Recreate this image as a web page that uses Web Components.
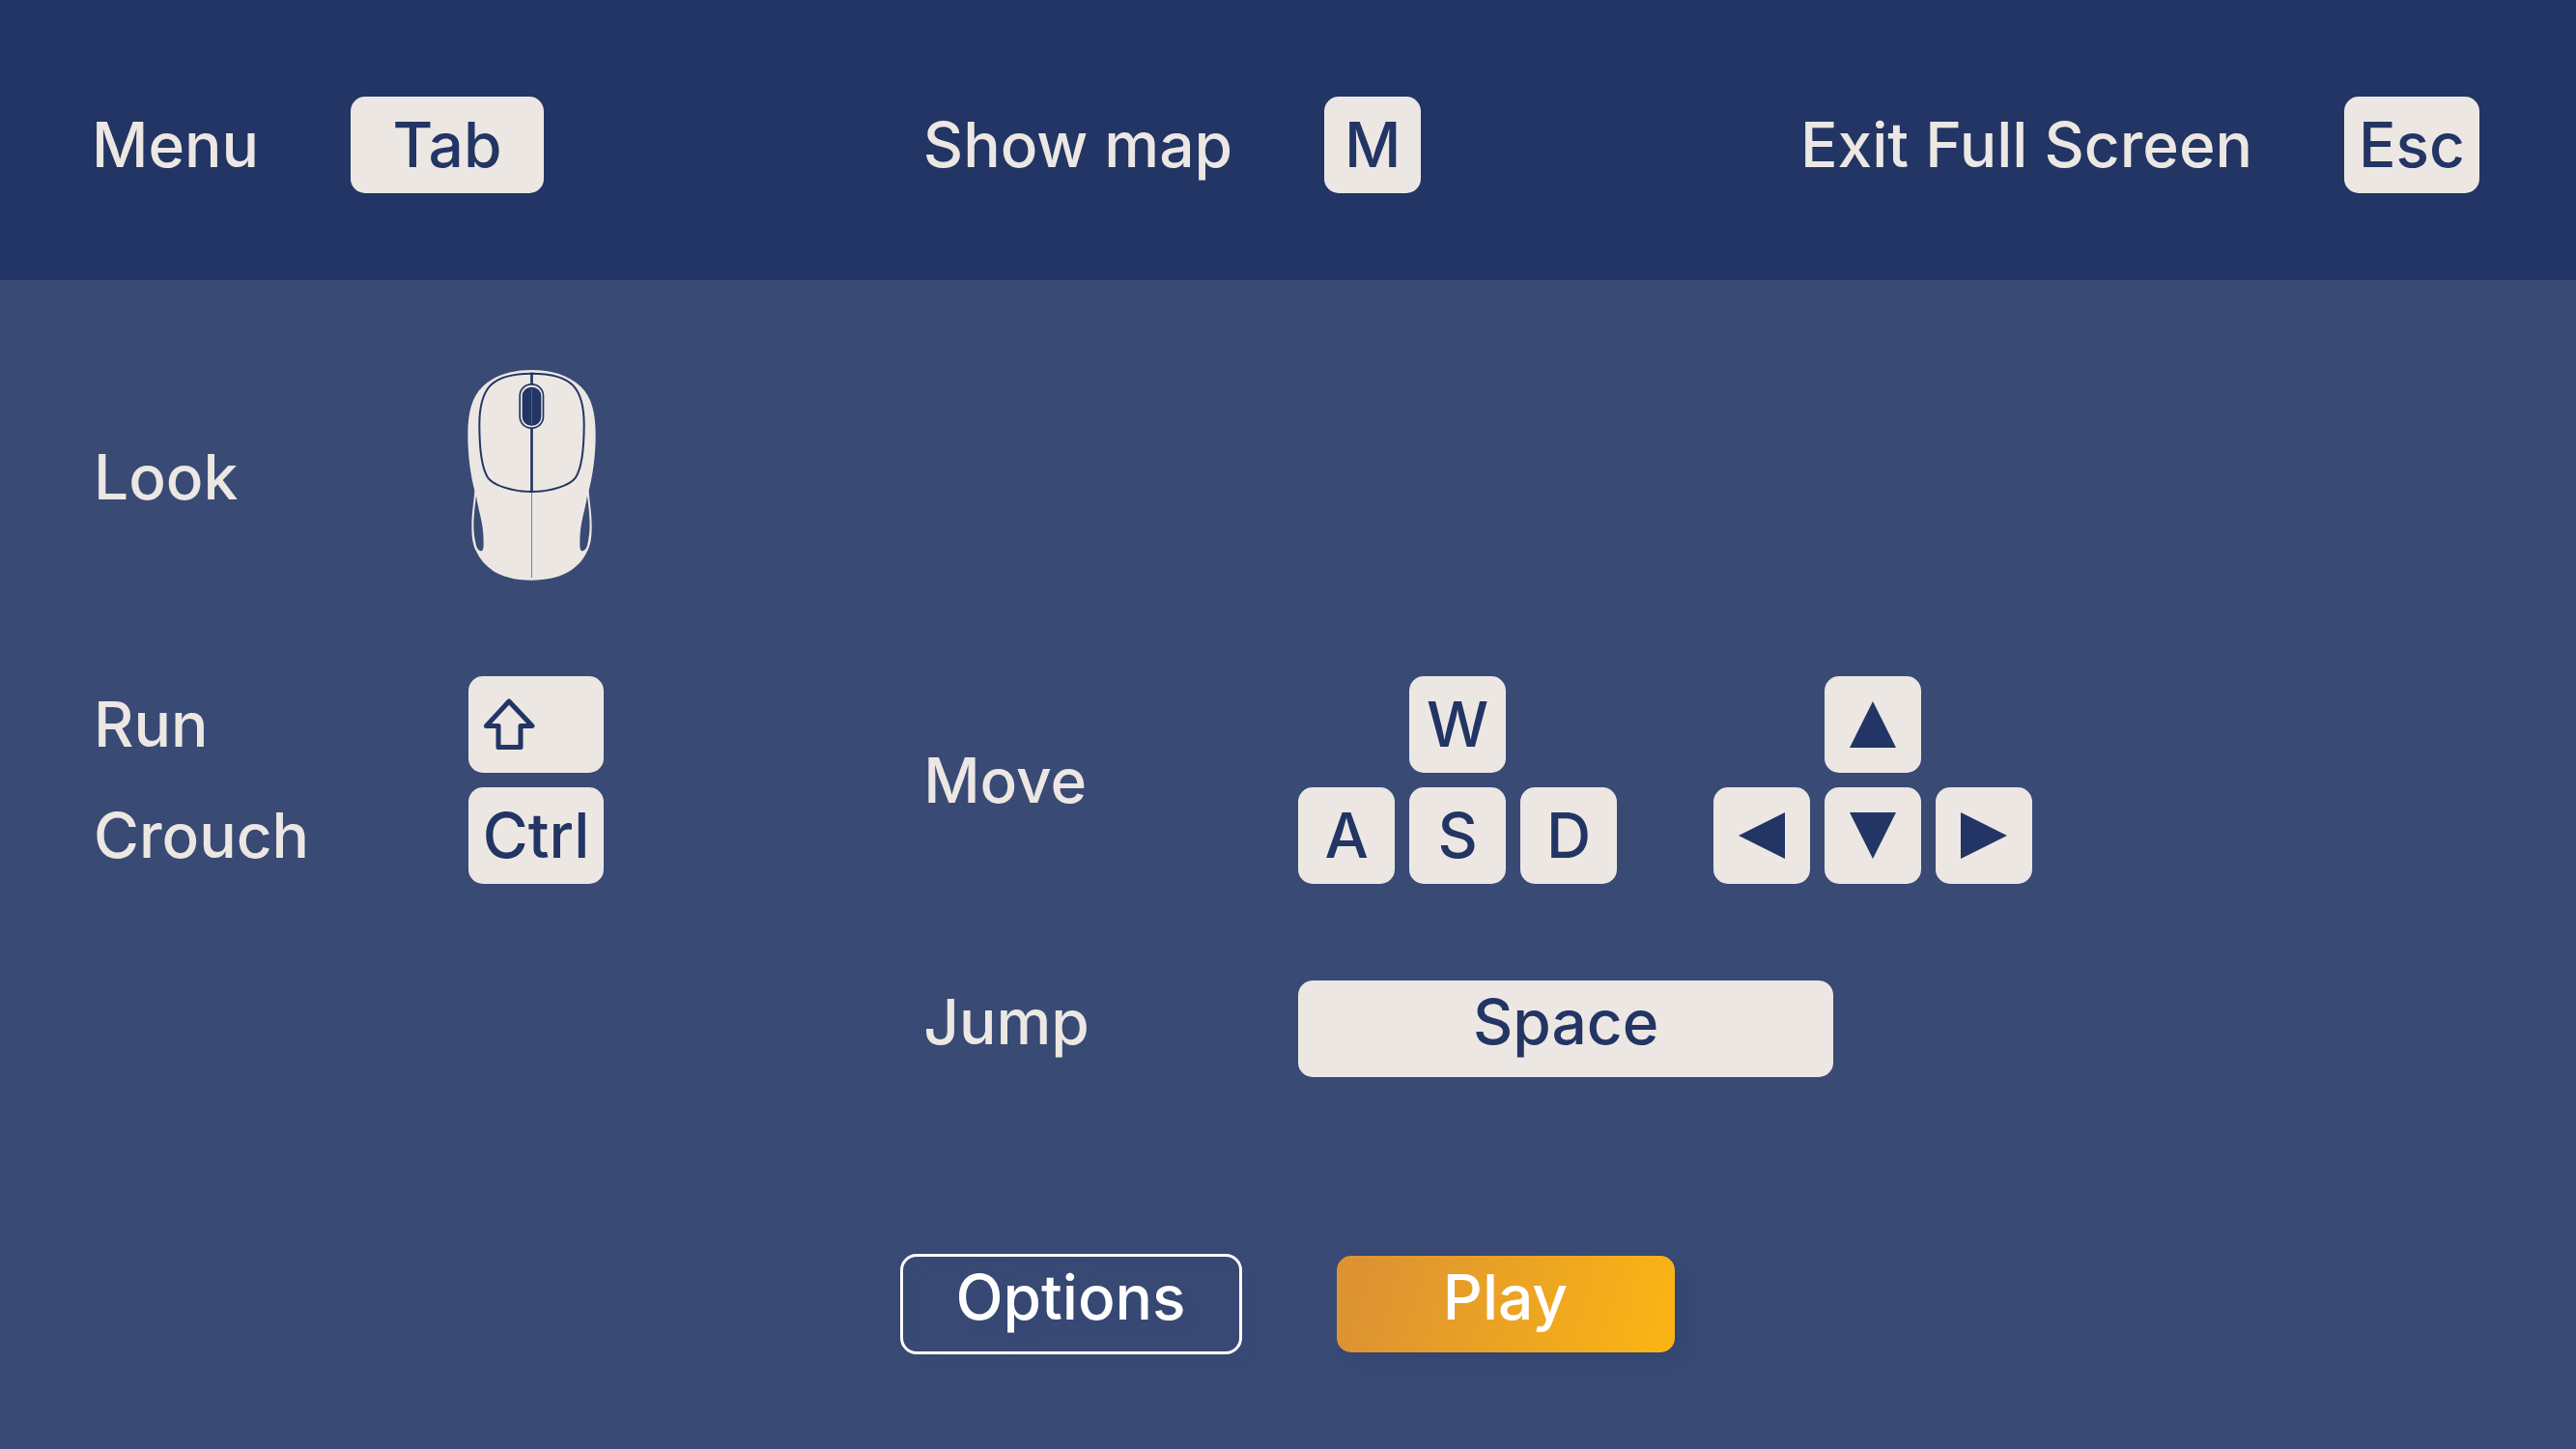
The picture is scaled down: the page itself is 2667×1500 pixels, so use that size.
<!DOCTYPE html>
<html lang="en">
<head>
<meta charset="utf-8">
<meta name="viewport" content="width=device-width, initial-scale=1">
<title>Controls</title>
<style>
  html { height: 100%; }
  body {
    --ink: #223564;
    --paper: #ece7e3;
    --bg: #394a75;
    --key: 100px;
    --gap: 15px;
    --label: 388px;
    margin: 0;
    min-height: 100%;
    background: var(--bg);
    color: var(--paper);
    font: 500 64px/78px Inter, "Liberation Sans", sans-serif;
  }
</style>
</head>
<body>
<controls-screen></controls-screen>

<template id="t-key">
  <style>
    :host { display: block; }
    kbd {
      box-sizing: border-box;
      display: flex; align-items: center; justify-content: center;
      min-width: var(--key); height: var(--key);
      border-radius: 15px;
      background: var(--paper); color: var(--ink);
      font: inherit;
    }
    :host([size="medium"]) kbd { width: 140px; }
    :host([size="wide"]) kbd { width: 200px; }
    :host([size="space"]) kbd { width: 554px; padding-bottom: 14px; }
    :host([align="start"]) kbd { justify-content: flex-start; padding-left: 15px; }
  </style>
  <kbd><slot></slot></kbd>
</template>

<template id="t-hint">
  <style>
    :host { display: flex; align-items: center; gap: 95px; }
    :host([column]) { gap: 0; }
    :host([column]) .label { width: var(--label); }
    :host([raised]) .label { padding-bottom: 14px; }
    .label { white-space: nowrap; }
  </style>
  <span class="label"><slot name="label"></slot></span>
  <slot></slot>
</template>

<template id="t-cluster">
  <style>
    :host {
      display: grid;
      grid-template-columns: repeat(3, var(--key));
      gap: var(--gap);
    }
    ::slotted(:first-child) { grid-column: 2; }
    ::slotted(:nth-child(2)) { grid-column: 1; }
  </style>
  <slot></slot>
</template>

<template id="t-arrow">
  <style>
    :host { display: block; width: 48px; height: 48px; }
    svg { display: block; width: 100%; height: 100%; fill: var(--ink); }
    :host([dir="right"]) svg { transform: rotate(90deg); }
    :host([dir="down"]) svg { transform: rotate(180deg); }
    :host([dir="left"]) svg { transform: rotate(270deg); }
  </style>
  <svg viewBox="0 0 48 48" aria-hidden="true"><path d="M24 0 48 48H0Z"/></svg>
</template>

<template id="t-shift">
  <style>
    :host { display: block; width: 54px; height: 54px; }
    svg { display: block; fill: none; stroke: var(--ink); stroke-width: 5; stroke-linejoin: round; }
  </style>
  <svg viewBox="0 0 54 54" width="54" height="54" aria-hidden="true">
    <path d="M27 3 51 28.500H39V50.500H16V28.500H3.500Z"/>
  </svg>
</template>

<template id="t-mouse">
  <style>
    :host { display: block; }
    svg { display: block; overflow: visible; }
    .body { fill: var(--paper); }
    .hole { fill: var(--bg); }
    .line { fill: none; stroke: var(--ink); stroke-width: 6; }
    .dark { fill: var(--ink); }
  </style>
  <svg viewBox="78 39 399 666" width="133" height="222" aria-hidden="true">
    <path class="body" d="M274.500 39C215 39 160 54 122 91C88 124 76 172 76 240C76 310 86 370 97 413C95 450 88 480 88 525C88 560 92 585 103 604C130 662 190 692 274.500 692C359 692 419 662 446 604C457 585 461 560 461 525C461 480 454 450 452 413C463 370 473 310 473 240C473 172 461 124 427 91C389 54 334 39 274.500 39Z"/>
    <path class="hole" d="M102 430C108 475 126 515 125 578C125 592 123 601 118 601C110 601 104 594 101 580C90 530 94 495 102 430Z"/>
    <path class="hole" d="M447 430C441 475 423 515 424 578C424 592 426 601 431 601C439 601 445 594 448 580C459 530 455 495 447 430Z"/>
    <path class="line" d="M274.500 50C220 50 172 60 145 88C118 118 112 160 112 208C112 285 120 345 138 373C156 397 212 417 274.500 417C337 417 393 397 411 373C429 345 437 285 437 208C437 160 431 118 404 88C377 60 329 50 274.500 50Z"/>
    <path class="line" style="stroke-width:8" d="M274.500 47V417"/>
    <path class="line" style="stroke-width:3;opacity:.6" d="M274.500 417V684"/>
    <rect class="dark" x="235" y="81" width="78" height="141" rx="38"/>
    <rect class="body" x="240" y="86" width="68" height="131" rx="33"/>
    <rect class="dark" x="245" y="92" width="59" height="120" rx="28"/>
    <path class="line" style="stroke:var(--paper);stroke-width:2;opacity:.35" d="M274.500 98V207"/>
  </svg>
</template>

<template id="t-action">
  <style>
    :host { display: block; }
    button {
      box-sizing: border-box;
      display: flex; align-items: center; justify-content: center;
      width: 350px; height: 100px;
      padding: 0 0 14px;
      border: 0; border-radius: 15px;
      background: none;
      color: #fff; font: inherit; cursor: pointer;
      filter: drop-shadow(10px 10px 10px rgba(33, 52, 100, .25));
    }
    :host([kind="outline"]) button { outline: 3px solid #fff; outline-offset: -1px; }
    :host([kind="primary"]) button { background: linear-gradient(106deg, #dd9332 8%, #fab414 96%); }
  </style>
  <button type="button"><slot></slot></button>
</template>

<template id="t-screen">
  <style>
    :host { display: block; }
    header {
      display: flex; justify-content: space-between; align-items: center;
      padding: 100px 100px 90px 95px;
      background: var(--ink);
    }
    main {
      display: grid;
      grid-template-columns: 8fr 15fr;
      align-items: center;
      padding: 93px 100px 0 97px;
    }
    .stack { display: grid; gap: var(--gap); }
    .look { grid-column: 1 / -1; margin-bottom: 95px; }
    .jump { grid-column: 2; margin-top: 100px; }
    .clusters { display: flex; gap: 100px; }
    footer { display: flex; justify-content: center; gap: 100px; padding: 185px 0 100px; }
  </style>
  <header>
    <control-hint><span slot="label">Menu</span><key-cap size="wide">Tab</key-cap></control-hint>
    <control-hint><span slot="label">Show map</span><key-cap>M</key-cap></control-hint>
    <control-hint><span slot="label">Exit Full Screen</span><key-cap size="medium">Esc</key-cap></control-hint>
  </header>
  <main>
    <control-hint class="look" column><span slot="label">Look</span><mouse-icon></mouse-icon></control-hint>
    <div class="stack">
      <control-hint column><span slot="label">Run</span><key-cap size="medium" align="start"><shift-icon></shift-icon></key-cap></control-hint>
      <control-hint column><span slot="label">Crouch</span><key-cap size="medium">Ctrl</key-cap></control-hint>
    </div>
    <control-hint column>
      <span slot="label">Move</span>
      <div class="clusters">
        <key-cluster><key-cap>W</key-cap><key-cap>A</key-cap><key-cap>S</key-cap><key-cap>D</key-cap></key-cluster>
        <key-cluster>
          <key-cap><arrow-icon dir="up"></arrow-icon></key-cap>
          <key-cap><arrow-icon dir="left"></arrow-icon></key-cap>
          <key-cap><arrow-icon dir="down"></arrow-icon></key-cap>
          <key-cap><arrow-icon dir="right"></arrow-icon></key-cap>
        </key-cluster>
      </div>
    </control-hint>
    <control-hint class="jump" column raised><span slot="label">Jump</span><key-cap size="space">Space</key-cap></control-hint>
  </main>
  <footer>
    <action-button kind="outline">Options</action-button>
    <action-button kind="primary">Play</action-button>
  </footer>
</template>

<script>
  class TemplateElement extends HTMLElement {
    constructor() {
      super();
      const template = document.getElementById(this.constructor.template);
      this.attachShadow({ mode: "open" }).append(template.content.cloneNode(true));
    }
  }
  class KeyCap extends TemplateElement { static template = "t-key"; }
  class ControlHint extends TemplateElement { static template = "t-hint"; }
  class KeyCluster extends TemplateElement { static template = "t-cluster"; }
  class ArrowIcon extends TemplateElement { static template = "t-arrow"; }
  class ShiftIcon extends TemplateElement { static template = "t-shift"; }
  class MouseIcon extends TemplateElement { static template = "t-mouse"; }
  class ActionButton extends TemplateElement { static template = "t-action"; }
  class ControlsScreen extends TemplateElement { static template = "t-screen"; }

  customElements.define("key-cap", KeyCap);
  customElements.define("control-hint", ControlHint);
  customElements.define("key-cluster", KeyCluster);
  customElements.define("arrow-icon", ArrowIcon);
  customElements.define("shift-icon", ShiftIcon);
  customElements.define("mouse-icon", MouseIcon);
  customElements.define("action-button", ActionButton);
  customElements.define("controls-screen", ControlsScreen);
</script>
</body>
</html>
